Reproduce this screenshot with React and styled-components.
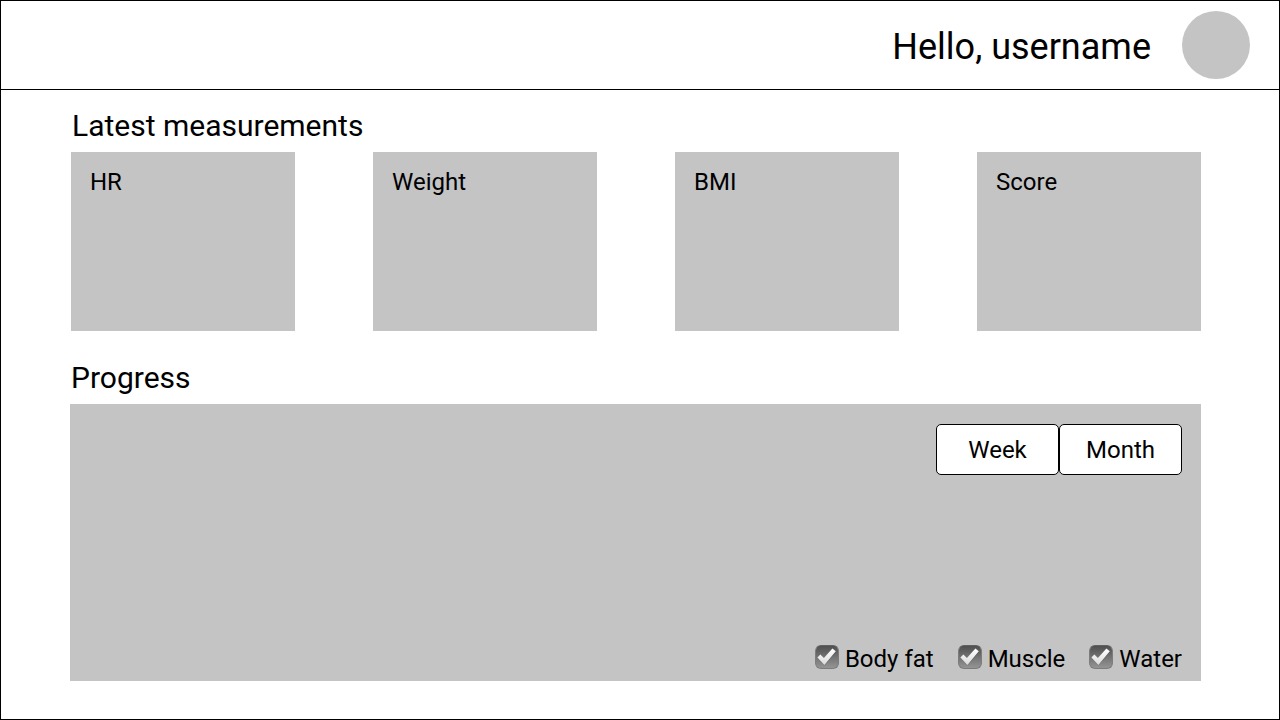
import React, { useState } from "react";
import styled, { createGlobalStyle } from "styled-components";

const GlobalStyle = createGlobalStyle`
  *, *::before, *::after { box-sizing: border-box; }
  body {
    margin: 0;
    background: #fff;
    color: #000;
    font-family: Roboto, "Liberation Sans", sans-serif;
    font-size: 24px;
    line-height: 28px;
  }
`;

const Page = styled.div`
  min-height: 100vh;
  border: 1px solid #000;
`;

const Header = styled.header`
  display: flex;
  align-items: center;
  justify-content: flex-end;
  gap: 31px;
  padding: 10px 29px 10px 69px;
  border-bottom: 1px solid #000;
`;

const Greeting = styled.p`
  margin: 0;
  padding-top: 4px;
  font-size: 36px;
  line-height: 42px;
`;

const Avatar = styled.div`
  width: 68px;
  height: 68px;
  border-radius: 50%;
  background: #c4c4c4;
`;

const Main = styled.main`
  display: flex;
  flex-direction: column;
  gap: 29px;
  padding: 18px 78px 38px 69px;
`;

const Section = styled.section`
  padding-left: ${({ $inset }) => ($inset ? "1px" : "0")};
`;

const SectionTitle = styled.h2`
  margin: 0 0 8px;
  padding-left: 1px;
  font-size: 30px;
  font-weight: 400;
  line-height: 36px;
`;

const CardGrid = styled.div`
  display: grid;
  grid-template-columns: repeat(4, 1fr);
  gap: 78px;
`;

const Card = styled.article`
  min-height: 179px;
  padding: 16px 19px;
  background: #c4c4c4;
`;

const CardTitle = styled.h3`
  margin: 0;
  font-size: 24px;
  font-weight: 400;
  line-height: 28px;
`;

const ChartPanel = styled.div`
  display: flex;
  flex-direction: column;
  align-items: flex-end;
  justify-content: space-between;
  min-height: 277px;
  padding: 20px 19px 8px;
  background: #c4c4c4;
`;

const RangeSwitch = styled.div`
  display: flex;
`;

const RangeButton = styled.button`
  width: 123px;
  height: 51px;
  padding: 0;
  border: 1px solid #000;
  border-radius: 5px;
  background: #fff;
  color: inherit;
  font: inherit;
  cursor: pointer;
`;

const SeriesList = styled.div`
  display: flex;
  gap: 24px;
`;

const SeriesLabel = styled.label`
  display: flex;
  align-items: flex-start;
  gap: 6px;
  cursor: pointer;
`;

const CheckBox = styled.span`
  display: grid;
  width: 24px;
  height: 24px;
`;

const CheckInput = styled.input`
  grid-area: 1 / 1;
  appearance: none;
  width: 24px;
  height: 24px;
  margin: 0;
  border: 1px solid #7c7c7c;
  border-top-color: #606060;
  border-radius: 6px;
  background: linear-gradient(#4c4c4c, #989898) border-box;
`;

const CheckMark = styled.svg`
  grid-area: 1 / 1;
  width: 24px;
  height: 24px;
  pointer-events: none;

  ${CheckInput}:not(:checked) + & {
    visibility: hidden;
  }
`;

const MEASUREMENTS = ["HR", "Weight", "BMI", "Score"];
const RANGES = ["Week", "Month"];
const SERIES = ["Body fat", "Muscle", "Water"];

function SeriesToggle({ name }) {
  const [checked, setChecked] = useState(true);
  return (
    <SeriesLabel>
      <CheckBox>
        <CheckInput
          type="checkbox"
          checked={checked}
          onChange={(e) => setChecked(e.target.checked)}
        />
        <CheckMark viewBox="0 0 24 24" aria-hidden="true">
          <defs>
            <linearGradient id="tick" x1="0" y1="0" x2="0" y2="1">
              <stop offset="0" stopColor="#ffffff" />
              <stop offset="1" stopColor="#dadada" />
            </linearGradient>
          </defs>
          <path
            d="M2.8 13.2 5.6 10.4 9.1 14 17.6 4.4 21 7 9.6 20.6Z"
            fill="#000"
            opacity="0.2"
          />
          <path
            d="M2.4 12.4 5.4 9.4 8.9 13 17.4 3.6 20.8 6.2 9.4 20Z"
            fill="url(#tick)"
          />
        </CheckMark>
      </CheckBox>
      {name}
    </SeriesLabel>
  );
}

export default function App() {
  const [range, setRange] = useState("Week");
  return (
    <>
      <GlobalStyle />
      <Page>
        <Header>
          <Greeting>Hello, username</Greeting>
          <Avatar />
        </Header>
        <Main>
          <Section $inset>
            <SectionTitle>Latest measurements</SectionTitle>
            <CardGrid>
              {MEASUREMENTS.map((name) => (
                <Card key={name}>
                  <CardTitle>{name}</CardTitle>
                </Card>
              ))}
            </CardGrid>
          </Section>
          <Section>
            <SectionTitle>Progress</SectionTitle>
            <ChartPanel>
              <RangeSwitch>
                {RANGES.map((name) => (
                  <RangeButton
                    key={name}
                    type="button"
                    aria-pressed={range === name}
                    onClick={() => setRange(name)}
                  >
                    {name}
                  </RangeButton>
                ))}
              </RangeSwitch>
              <SeriesList>
                {SERIES.map((name) => (
                  <SeriesToggle key={name} name={name} />
                ))}
              </SeriesList>
            </ChartPanel>
          </Section>
        </Main>
      </Page>
    </>
  );
}
